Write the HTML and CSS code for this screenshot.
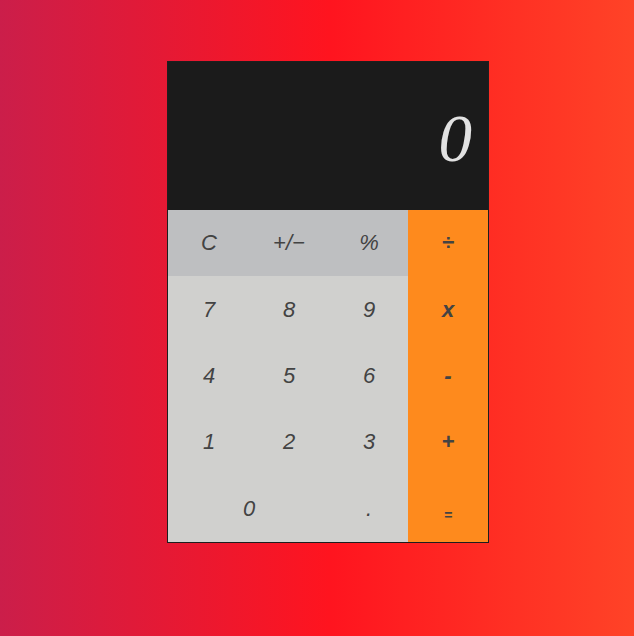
FILE: index.html
```html
<!DOCTYPE html>
<html>
<head>
<meta charset="utf-8">
<link rel="stylesheet" href="styles.css">
</head>
<body>
<div class="page">
  <div class="calc">
    <div class="display"><span class="value">0</span></div>
    <div class="keypad">
      <button class="key fn">C</button>
      <button class="key fn">+/−</button>
      <button class="key fn">%</button>
      <button class="key op">÷</button>
      <button class="key">7</button>
      <button class="key">8</button>
      <button class="key">9</button>
      <button class="key op">x</button>
      <button class="key">4</button>
      <button class="key">5</button>
      <button class="key">6</button>
      <button class="key op">-</button>
      <button class="key">1</button>
      <button class="key">2</button>
      <button class="key">3</button>
      <button class="key op">+</button>
      <button class="key zero">0</button>
      <button class="key">.</button>
      <button class="key op eq">=</button>
    </div>
  </div>
</div>
</body>
</html>
```
FILE: styles.css
```css
html, body {
  margin: 0;
  height: 100%;
}
body {
  background: linear-gradient(to right, #cb1e4a 0%, #ff141f 52%, #ff4327 100%);
}
.page {
  padding: 61px 0 0 167px;
}
.calc {
  width: 320px;
  height: 480px;
  border: 1px solid #1e1e1e;
  display: flex;
  flex-direction: column;
  background: #d0d0ce;
}
.display {
  height: 148px;
  background: #1b1b1b;
  display: flex;
  align-items: center;
  justify-content: flex-end;
  padding: 0 16px 0 0;
  box-sizing: border-box;
}
.value {
  font-family: "Liberation Serif", serif;
  font-style: italic;
  font-size: 67px;
  color: #e2e2e2;
  line-height: 1;
  margin-top: 4px;
}
.keypad {
  flex: 1;
  display: grid;
  grid-template-columns: repeat(4, 80px);
  grid-template-rows: repeat(5, 1fr);
}
.key {
  border: 0;
  margin: 0;
  padding: 0 0 0 2px;
  background: #d0d0ce;
  font-family: "Liberation Sans", Arial, sans-serif;
  font-style: italic;
  font-size: 22px;
  color: #434343;
  display: flex;
  align-items: center;
  justify-content: center;
}
.fn {
  background: #bebfc1;
}
.op {
  background: #fe8a1d;
  font-weight: bold;
  padding-left: 0;
}
.zero {
  grid-column: span 2;
}
.eq {
  font-size: 14px;
  padding-top: 12px;
}
```
